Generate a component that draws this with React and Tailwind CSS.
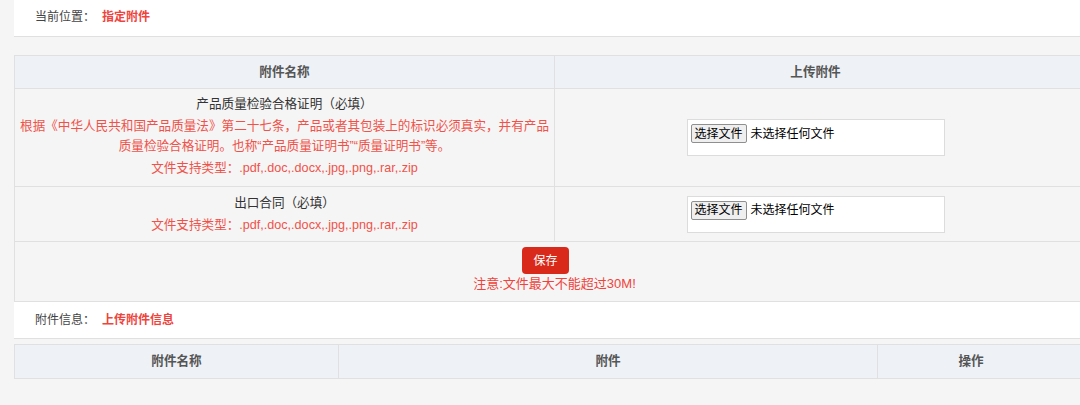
import React from 'react';

const font = { fontFamily: '"Liberation Sans", "Noto Sans CJK SC", sans-serif' };

function FileBox() {
  return (
    <div className="w-[258px] h-[37px] bg-white border border-[#dcdcdc] pl-[3px] pt-[4px]">
      <div className="flex items-center text-[12px] text-black leading-none">
        <span className="h-[19px] px-[3px] flex items-center border border-[#8f8f8f] rounded-[2px] bg-[#efefef]">选择文件</span>
        <span className="ml-[4px]">未选择任何文件</span>
      </div>
    </div>
  );
}

function TypesLine() {
  return <p className="text-[#f0524a]">文件支持类型：.pdf,.doc,.docx,.jpg,.png,.rar,.zip</p>;
}

export default function App() {
  return (
    <div className="w-[1080px] h-[405px] overflow-hidden bg-[#f5f5f5]" style={font}>
      <div className="ml-[14px] w-[1080px]">
        <div className="h-[37px] bg-white border-b border-[#e0e0e0] flex items-center pl-[21px] text-[12px] pb-[2px]">
          <span className="text-[#444]">当前位置：</span>
          <span className="ml-[7px] text-[#f0433c] font-bold">指定附件</span>
        </div>

        <div className="mt-[18px] border-t border-l border-[#e0e0e0] text-[12.6px]">
          <div className="grid grid-cols-[540px_1fr] h-[33px] bg-[#eef2f6] border-b border-[#e0e0e0] font-bold text-[#555]">
            <div className="flex items-center justify-center border-r border-[#e0e0e0]">附件名称</div>
            <div className="flex items-center justify-center pr-[18px]">上传附件</div>
          </div>

          <div className="grid grid-cols-[540px_1fr] h-[98px] border-b border-[#e0e0e0]">
            <div className="border-r border-[#e0e0e0] text-center pt-[5px] leading-[20px]">
              <p className="text-[#333] mb-[2px]">产品质量检验合格证明（必填）</p>
              <p className="text-[#f0524a] leading-[20px]">
                根据《中华人民共和国产品质量法》第二十七条，产品或者其包装上的标识必须真实，并有产品
                <br />
                质量检验合格证明。也称“产品质量证明书”“质量证明书”等。
              </p>
              <div className="mt-[2px]"><TypesLine /></div>
            </div>
            <div className="flex items-center justify-center pr-[18px]">
              <FileBox />
            </div>
          </div>

          <div className="grid grid-cols-[540px_1fr] h-[55px] border-b border-[#e0e0e0]">
            <div className="border-r border-[#e0e0e0] text-center pt-[5px] leading-[22px]">
              <p className="text-[#333]">出口合同（必填）</p>
              <TypesLine />
            </div>
            <div className="flex items-center justify-center pr-[18px]">
              <FileBox />
            </div>
          </div>

          <div className="h-[60px] border-b border-[#e0e0e0] flex flex-col items-center pt-[5px]">
            <button className="w-[47px] h-[27px] rounded-[4px] bg-[#d9291a] text-white text-[12px] mr-[18px]">保存</button>
            <p className="text-[#f0433c] text-[13px] leading-[18px] mt-[1px]">注意:文件最大不能超过30M!</p>
          </div>
        </div>

        <div className="h-[37px] bg-white border-b border-[#e0e0e0] flex items-center pl-[21px] text-[12px]">
          <span className="text-[#444]">附件信息：</span>
          <span className="ml-[7px] text-[#f0433c] font-bold">上传附件信息</span>
        </div>

        <div className="mt-[5px] grid grid-cols-[324px_539px_1fr] h-[35px] bg-[#eef2f6] border border-[#e0e0e0] font-bold text-[#555] text-[12.6px]">
          <div className="flex items-center justify-center border-r border-[#e0e0e0]">附件名称</div>
          <div className="flex items-center justify-center border-r border-[#e0e0e0]">附件</div>
          <div className="flex items-center justify-center pr-[29px]">操作</div>
        </div>
      </div>
    </div>
  );
}
